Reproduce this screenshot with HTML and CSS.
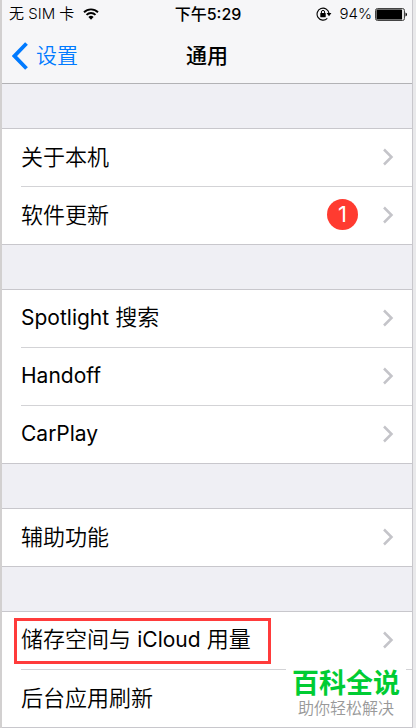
FILE: index.html
```html
<!DOCTYPE html>
<html lang="zh-CN">
<head>
<meta charset="utf-8">
<meta name="viewport" content="width=device-width, initial-scale=1">
<title>通用</title>
<link rel="stylesheet" href="styles.css">
</head>
<body>
<svg class="symbols" aria-hidden="true">
  <symbol id="chevron" viewBox="0 0 12 18"><path d="M2 1.500 9.500 9 2 16.500" fill="none" stroke="#c4c4c9" stroke-width="2.500"/></symbol>
</svg>
<div class="screen">
  <header class="top">
    <div class="status">
      <div class="carrier">
        <span>无 SIM 卡</span>
        <svg class="wifi" viewBox="0 0 16 12" aria-hidden="true">
          <path d="M1 4.200a10 10 0 0 1 14 0M3.500 6.900a6.400 6.400 0 0 1 9 0" fill="none" stroke="#000" stroke-width="1.900"/>
          <path d="M5.400 9a3.800 3.800 0 0 1 5.200 0L8 11.800z"/>
        </svg>
      </div>
      <span class="time">下午5:29</span>
      <div class="power">
        <svg class="lock" viewBox="0 0 16 14" aria-hidden="true">
          <path d="M11.300 11.400A6 6 0 1 1 13 6.200" fill="none" stroke="#000" stroke-width="1.100"/>
          <path d="M10.600 6h4.800L13 9.200z"/>
          <rect x="4.300" y="6" width="5.400" height="4.200" rx=".4"/>
          <path d="M5.400 6.200V5a1.600 1.600 0 0 1 3.200 0v1.200" fill="none" stroke="#000"/>
        </svg>
        <span>94%</span>
        <svg class="battery" viewBox="0 0 32 13" aria-hidden="true">
          <rect x=".5" y=".5" width="29" height="12" rx="2" fill="#ddd" stroke="#444"/>
          <rect x="1.500" y="1.500" width="25.500" height="10" rx=".6"/>
          <path d="M30.500 4.500q1.500 .4 1.500 2t-1.500 2z"/>
        </svg>
      </div>
    </div>
    <nav class="nav">
      <a class="back" href="#">
        <svg class="arrow" viewBox="0 0 16 28" aria-hidden="true"><path d="M14.500 1.500 2.500 14l12 12.500" fill="none" stroke="#007aff" stroke-width="3.800"/></svg>
        <span>设置</span>
      </a>
      <h1 class="title">通用</h1>
    </nav>
  </header>
  <main>
    <div class="group">
      <a class="row" href="#"><span class="label">关于本机</span><svg class="chevron"><use href="#chevron"/></svg></a>
      <a class="row" href="#"><span class="label">软件更新</span><span class="badge">1</span><svg class="chevron"><use href="#chevron"/></svg></a>
    </div>
    <div class="group">
      <a class="row" href="#"><span class="label"><span class="latin">Spotlight</span> 搜索</span><svg class="chevron"><use href="#chevron"/></svg></a>
      <a class="row" href="#"><span class="label"><span class="latin">Handoff</span></span><svg class="chevron"><use href="#chevron"/></svg></a>
      <a class="row" href="#"><span class="label"><span class="latin">CarPlay</span></span><svg class="chevron"><use href="#chevron"/></svg></a>
    </div>
    <div class="group">
      <a class="row" href="#"><span class="label">辅助功能</span><svg class="chevron"><use href="#chevron"/></svg></a>
    </div>
    <div class="group">
      <a class="row" href="#"><span class="label marked">储存空间与 <span class="latin">iCloud</span> 用量</span><svg class="chevron"><use href="#chevron"/></svg></a>
      <a class="row" href="#"><span class="label">后台应用刷新</span></a>
      <div class="brand"><strong class="brand-name">百科全说</strong><span class="brand-line">助你轻松解决</span></div>
    </div>
  </main>
</div>
</body>
</html>
```
FILE: styles.css
```css
* {
  box-sizing: border-box;
}

body {
  margin: 0;
  padding: 0 3px 0 2px;
  background: linear-gradient(90deg, #d2d0d0 2px, #e9e9eb 2px);
  color: #000;
  font-family: Inter, "Noto Sans CJK SC", sans-serif;
  font-size: 22px;
  font-weight: 350;
  line-height: 24px;
}

a {
  color: inherit;
  text-decoration: none;
}

svg {
  flex: none;
}

.symbols {
  position: absolute;
  width: 0;
  height: 0;
}

.screen {
  border-right: 1px solid #c8c7cc;
  background: #efeff4;
}

.top {
  border-bottom: 1px solid #b2b2b5;
  background: #f6f6f8;
}

.status {
  display: grid;
  grid-template-columns: 1fr auto 1fr;
  align-items: center;
  height: 28px;
  padding: 0 5px 0 7px;
  font-size: 15px;
}

.carrier,
.power {
  display: flex;
  align-items: center;
  gap: 9px;
}

.power {
  justify-content: flex-end;
  gap: 3px;
}

.time {
  font-size: 16px;
  font-weight: 500;
}

.wifi {
  width: 16px;
  height: 12px;
}

.lock {
  width: 16px;
  height: 14px;
  margin-right: 4px;
}

.battery {
  width: 32px;
  height: 13px;
}

.nav {
  display: grid;
  grid-template-columns: 1fr auto 1fr;
  align-items: center;
  height: 55px;
  padding: 0 10px;
}

.back {
  display: flex;
  align-items: center;
  gap: 8px;
  color: #007aff;
  font-size: 21px;
}

.arrow {
  width: 16px;
  height: 28px;
}

.title {
  margin: 0;
  font-size: 21px;
  font-weight: 500;
}

.group {
  position: relative;
  margin-top: 44px;
  border: solid #c8c7cc;
  border-width: 1px 0;
  background: #fff;
}

.row {
  display: flex;
  align-items: center;
  height: 57px;
  margin-left: 19px;
  padding: 0 18px 2px 0;
}

.row + .row {
  height: 58px;
  border-top: 1px solid #d3d3d6;
}

.label {
  margin-right: auto;
}

.latin {
  font-size: 21px;
  font-weight: 400;
}

.badge {
  width: 31px;
  height: 31px;
  margin-right: 24px;
  border-radius: 50%;
  background: #ff3b30;
  color: #fff;
  font-weight: 400;
  line-height: 31px;
  text-align: center;
}

.chevron {
  width: 12px;
  height: 18px;
}

.marked {
  position: relative;
}

.marked::after {
  content: "";
  position: absolute;
  inset: -9px -20px -12px -7px;
  border: 3px solid #ff3b3b;
}

.brand {
  position: absolute;
  right: 6px;
  bottom: 0;
  display: flex;
  flex-direction: column;
  align-items: center;
  width: 120px;
  height: 59px;
  background: #fff;
}

.brand-name {
  color: #00cc33;
  font-size: 27px;
  font-weight: 700;
  line-height: 32px;
}

.brand-line {
  color: #999;
  font-size: 16px;
  line-height: 16px;
}
```
